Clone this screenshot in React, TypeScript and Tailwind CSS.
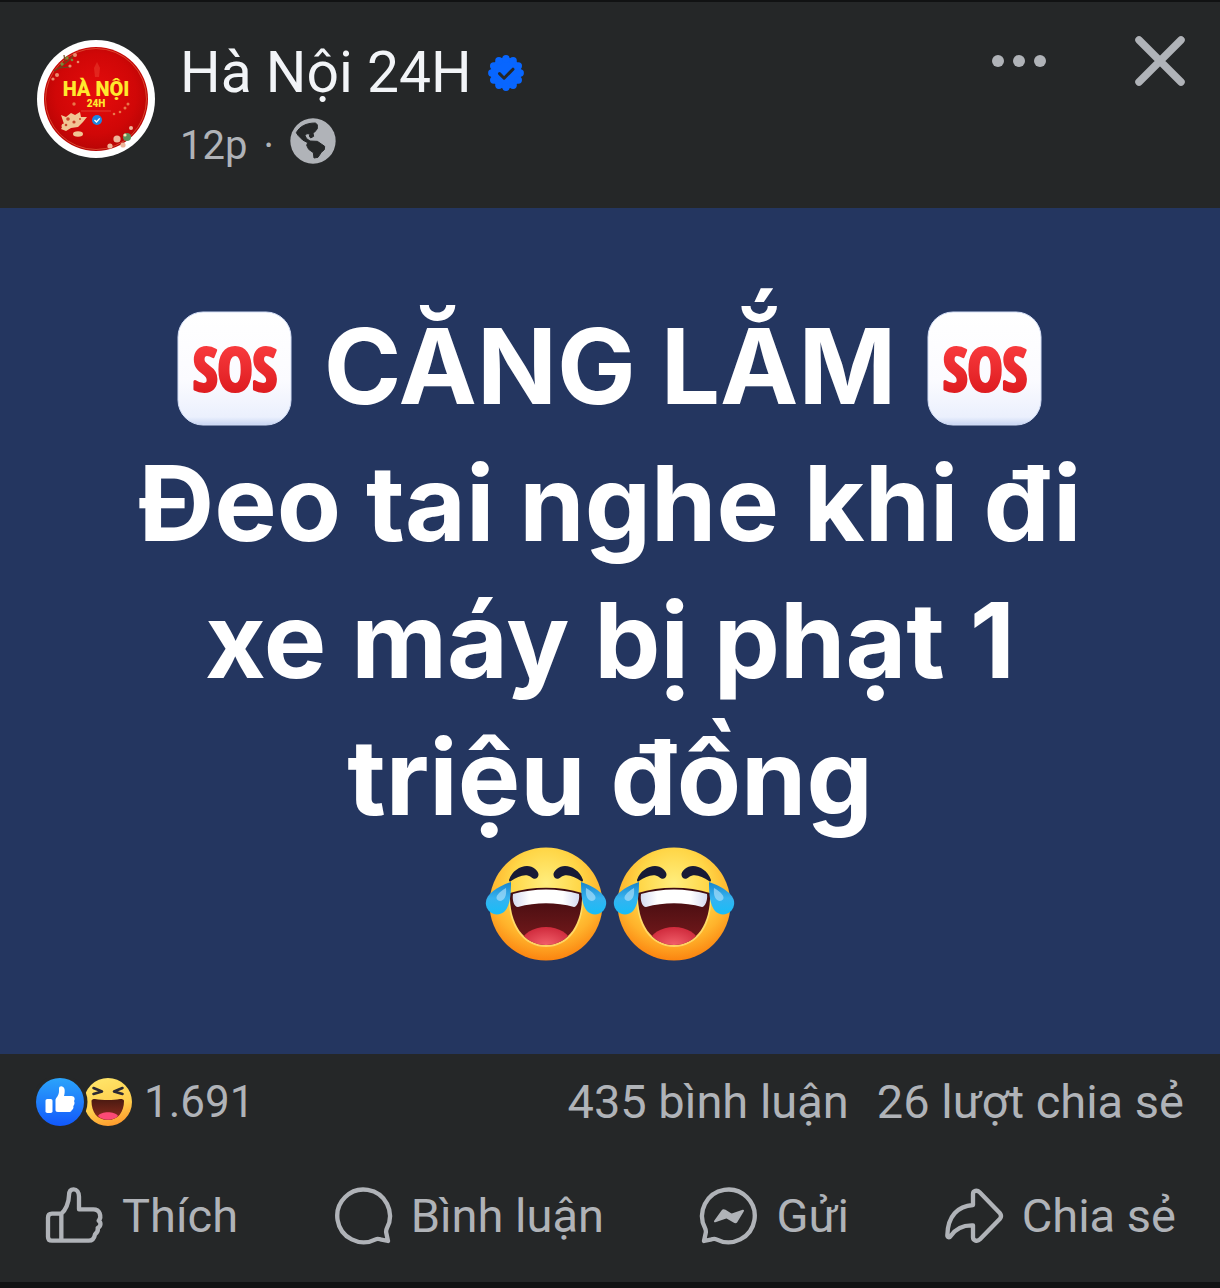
import type { ReactNode } from "react";

function Avatar() {
  return (
    <svg viewBox="0 0 118 118" className="size-[118px] shrink-0" role="img" aria-label="Hà Nội 24H">
      <defs>
        <radialGradient id="avatarRed" cx="50%" cy="45%" r="55%">
          <stop offset="0" stopColor="#e60c0c" />
          <stop offset="0.7" stopColor="#d00707" />
          <stop offset="1" stopColor="#b80505" />
        </radialGradient>
      </defs>
      <circle cx="59" cy="59" r="59" fill="#fff" />
      <circle cx="59" cy="59" r="52" fill="url(#avatarRed)" />
      <circle cx="59" cy="59" r="50.5" fill="none" stroke="#e8714a" strokeWidth="0.6" />
      <path d="M17 31 Q28 25 38 14 M22 28 L33 27 M28 22 L27 15" stroke="#6b4a1e" strokeWidth="1.2" fill="none" />
      <g fill="#e98a6c">
        <circle cx="38" cy="15" r="2" />
        <circle cx="33" cy="26" r="1.6" />
        <circle cx="20" cy="35" r="2" />
        <circle cx="16" cy="39" r="1.6" />
        <circle cx="41" cy="22" r="1.3" />
      </g>
      <g fill="#7d8a3a">
        <circle cx="30" cy="18" r="1.7" />
        <circle cx="25" cy="24" r="1.7" />
        <circle cx="35" cy="20" r="1.3" />
      </g>
      <path d="M60 22 l3 6 -1 9 h-4 l-1 -9z" fill="#f0503c" opacity="0.4" />
      <text x="59" y="56" textAnchor="middle" fontSize="20" fontWeight="900" fill="#ffe92e" fontFamily="Roboto, sans-serif">
        HÀ NỘI
      </text>
      <text x="59" y="67" textAnchor="middle" fontSize="10" fontWeight="900" fill="#ffe92e" fontFamily="Roboto, sans-serif">
        24H
      </text>
      <path d="M44 71 H74" stroke="#e8604a" strokeWidth="0.6" />
      <g fill="#e9764a">
        <circle cx="37" cy="64" r="1.7" />
        <circle cx="77" cy="74" r="1.3" />
        <circle cx="83" cy="72" r="1.3" />
        <circle cx="88" cy="68" r="1.5" />
        <circle cx="91" cy="64" r="1.5" />
      </g>
      <circle cx="60" cy="80" r="5" fill="#1d86e0" />
      <path d="M57.5 80 l2 2 3.2 -3.6" fill="none" stroke="#fff" strokeWidth="1.4" />
      <g fill="#f1c694">
        <path d="M24 75 l5 2 5 -4 4 2 5 -3 1 5 6 0 -4 5 -5 5 -7 1 -5 3 -5 -2 3 -5z" />
        <ellipse cx="41" cy="94" rx="5" ry="2.8" />
        <circle cx="27" cy="86" r="2.5" />
      </g>
      <g fill="#c8452a">
        <circle cx="31" cy="79" r="1.8" />
        <circle cx="37" cy="82" r="1.6" />
        <circle cx="29" cy="85" r="1.3" />
        <circle cx="43" cy="79" r="1" />
      </g>
      <g fill="#eeb59a">
        <circle cx="80" cy="99" r="3.6" />
        <circle cx="73" cy="106" r="2.6" />
        <circle cx="94" cy="88" r="2" />
        <circle cx="86" cy="105" r="2.6" />
      </g>
      <circle cx="90" cy="97" r="4" fill="#5f8f5a" />
      <circle cx="88" cy="95" r="1.6" fill="#f6e2b0" />
    </svg>
  );
}

function VerifiedBadge() {
  const points = Array.from({ length: 12 }, (_, i) => {
    const a = (i * Math.PI) / 6;
    return [18 + 14.2 * Math.cos(a), 18 + 14.2 * Math.sin(a)];
  });
  return (
    <svg viewBox="0 0 36 36" className="size-9" role="img" aria-label="Đã xác minh">
      <g fill="#0866ff">
        <circle cx="18" cy="18" r="15.4" />
        {points.map(([x, y], i) => (
          <circle key={i} cx={x} cy={y} r="3.7" />
        ))}
      </g>
      <path d="M11.5 18.6 l4.6 4.6 8.900 -9" fill="none" stroke="#252728" strokeWidth="3" strokeLinecap="round" strokeLinejoin="round" />
    </svg>
  );
}

function Globe() {
  return (
    <svg viewBox="0 0 138 138" className="size-[46px]" role="img" aria-label="Công khai">
      <circle cx="69" cy="69" r="68" fill="#b0b3b8" />
      <path
        d="M19 44 C28 26 48 15 76 15 L82 20 L82 32 L74 42 L69 46 L71 55 L62 60 L58 54 L60 48 L50 47 L45 53 L50 62 L60 69 L82 70 L94 78 L104 85 L103 95 L94 103 L84 118 L72 120 L70 104 L56 94 L50 82 L53 74 L38 66 L24 52 Z"
        fill="#252728"
        stroke="#252728"
        strokeWidth="3"
        strokeLinejoin="round"
      />
    </svg>
  );
}

function SosEmoji() {
  return (
    <svg viewBox="0 0 128 128" className="inline-block h-32 w-32 align-[-29px]" role="img" aria-label="SOS">
      <defs>
        <linearGradient id="sosTile" x1="0" y1="0" x2="0" y2="1">
          <stop offset="0" stopColor="#ffffff" />
          <stop offset="0.6" stopColor="#fbfbff" />
          <stop offset="0.93" stopColor="#ebf0fd" />
          <stop offset="1" stopColor="#c8d5f3" />
        </linearGradient>
        <linearGradient id="sosRed" x1="0" y1="0" x2="0" y2="1">
          <stop offset="0.2" stopColor="#f93b3e" />
          <stop offset="0.85" stopColor="#dc1a1e" />
        </linearGradient>
      </defs>
      <rect x="7" y="7" width="113" height="113" rx="25" fill="url(#sosTile)" stroke="#d3def6" strokeWidth="1" />
      <text x="64" y="86" textAnchor="middle" fontSize="59" fontWeight="700" fill="url(#sosRed)" stroke="url(#sosRed)" strokeWidth="3" strokeLinejoin="round" fontFamily="'Open Sans Condensed', 'Open Sans', sans-serif">
        SOS
      </text>
    </svg>
  );
}

function JoyEmoji() {
  return (
    <svg viewBox="0 0 128 116" className="inline-block h-[116px] w-32 align-[-10px]" role="img" aria-label="Cười ra nước mắt">
      <defs>
        <radialGradient id="joyFace" cx="50%" cy="32%" r="68%">
          <stop offset="0" stopColor="#ffee7e" />
          <stop offset="0.45" stopColor="#ffd647" />
          <stop offset="0.75" stopColor="#ffb22b" />
          <stop offset="1" stopColor="#fb8410" />
        </radialGradient>
        <linearGradient id="joyMouth" x1="0" y1="0" x2="0" y2="1">
          <stop offset="0" stopColor="#3d0b0f" />
          <stop offset="1" stopColor="#781a1c" />
        </linearGradient>
        <radialGradient id="joyTongue" cx="50%" cy="60%" r="60%">
          <stop offset="0" stopColor="#f2606b" />
          <stop offset="1" stopColor="#cf2a3c" />
        </radialGradient>
        <linearGradient id="joyTear" x1="0" y1="0" x2="0" y2="1">
          <stop offset="0" stopColor="#1784cc" />
          <stop offset="0.5" stopColor="#36b3ef" />
          <stop offset="1" stopColor="#17bdf8" />
        </linearGradient>
        <linearGradient id="joyTeeth" x1="0" y1="0" x2="1" y2="0">
          <stop offset="0" stopColor="#d5daf0" />
          <stop offset="0.25" stopColor="#ffffff" />
          <stop offset="0.75" stopColor="#ffffff" />
          <stop offset="1" stopColor="#d5daf0" />
        </linearGradient>
        <clipPath id="joyMouthClip">
          <path d="M28 47 C50 40 78 40 100 47 C101 78 86 99 64 99 C42 99 27 78 28 47Z" />
        </clipPath>
      </defs>
      <circle cx="64" cy="58" r="56.5" fill="url(#joyFace)" />
      <path d="M27 48 C50 40 78 40 101 48 C103 79 87 101 64 101 C41 101 25 79 27 48Z" fill="#fff08a" opacity="0.6" />
      <path d="M28 47 C50 40 78 40 100 47 C101 78 86 99 64 99 C42 99 27 78 28 47Z" fill="url(#joyMouth)" />
      <g clipPath="url(#joyMouthClip)">
        <ellipse cx="64" cy="96" rx="24" ry="15" fill="url(#joyTongue)" />
      </g>
      <path d="M31 48 C52 42 76 42 97 48 C98 54 95 61 92 61 C74 56 54 56 36 61 C32 61 30 54 31 48Z" fill="url(#joyTeeth)" />
      <path
        d="M27 34 C30 25 38 20 45 20 C51 20 57 25 56.500 29 C56 33 52 34 49 31 C44 27 36 30 29 35 C28 36 27 35.500 27 34Z M101 34 C98 25 90 20 83 20 C77 20 71 25 71.500 29 C72 33 76 34 79 31 C84 27 92 30 99 35 C100 36 101 35.500 101 34Z"
        fill="#171a36"
      />
      <path d="M29 36 C29 49 28 59 23 65 C17 71 6 69 4 59 C2 49 15 41 29 36Z" fill="url(#joyTear)" />
      <path d="M99 36 C99 49 100 59 105 65 C111 71 122 69 124 59 C126 49 113 41 99 36Z" fill="url(#joyTear)" />
      <path d="M24 42 C25 50 22 55 18 55 C13 54 12 49 24 42Z" fill="#a7ddfa" opacity="0.7" />
      <path d="M104 42 C103 50 106 55 110 55 C115 54 116 49 104 42Z" fill="#a7ddfa" opacity="0.7" />
    </svg>
  );
}

function Reactions() {
  return (
    <svg viewBox="0 0 96 48" className="h-12 w-24" role="img" aria-label="Thích và Haha">
      <defs>
        <linearGradient id="likeBlue" x1="0" y1="0" x2="0" y2="1">
          <stop offset="0" stopColor="#2ba4fb" />
          <stop offset="1" stopColor="#1258fb" />
        </linearGradient>
        <linearGradient id="hahaFace" x1="0.3" y1="0" x2="0.6" y2="1">
          <stop offset="0" stopColor="#ffe56a" />
          <stop offset="0.6" stopColor="#ffcf4d" />
          <stop offset="1" stopColor="#ff9a2c" />
        </linearGradient>
        <linearGradient id="hahaMouth" x1="0" y1="0" x2="0" y2="1">
          <stop offset="0" stopColor="#4a1a12" />
          <stop offset="1" stopColor="#8c2c1c" />
        </linearGradient>
      </defs>
      <circle cx="72" cy="24" r="24" fill="url(#hahaFace)" />
      <path d="M55.500 23 C55.500 21.500 57 21 59 21 C67 22.300 77 22.300 84 21 C86.500 21 88 21.500 88 23 C88 34 82 42 72 42 C61 42 55.500 34 55.500 23Z" fill="url(#hahaMouth)" />
      <path d="M62 38 C65 33 79 33 82 38 C77 43 67 43 62 38Z" fill="#fb4a75" />
      <path d="M57.500 10 L66 13.500 L57.500 16 M86.500 10 L78 13.500 L86.500 16" fill="none" stroke="#2d2a33" strokeWidth="2.600" strokeLinecap="round" strokeLinejoin="round" />
      <circle cx="24" cy="24" r="27.5" fill="#252728" />
      <circle cx="24" cy="24" r="24" fill="url(#likeBlue)" />
      <rect x="9.500" y="21" width="7" height="14" rx="1.800" fill="#fff" />
      <path d="M19.500 32 V22 C19.500 20 23 18 23 13 V10.500 C23 7.500 27.500 7.500 28.500 11 C29 13.500 28.500 16 28 18 H35.500 C38.500 18 39.500 21 38 23 C39 24.500 38.500 27 37.300 28 C37.800 30 37 31.500 35.800 32 C35.500 33.500 34.500 34 33 34 H22 C20 34 19.500 33 19.500 32Z" fill="#fff" />
    </svg>
  );
}

function Outline({ children }: { children: ReactNode }) {
  return (
    <svg viewBox="0 0 180 180" className="size-15 shrink-0" fill="none" stroke="#b0b3b8" strokeWidth="13" strokeLinecap="round" strokeLinejoin="round" aria-hidden="true">
      {children}
    </svg>
  );
}

const actions = [
  {
    label: "Thích",
    icon: (
      <Outline>
        <path d="M52 83 V164 M52 83 H24 Q12 83 12 95 V152 Q12 164 24 164 H134 C146 164 151 157 153 145 C160 139 163 133 161 126 C171 121 172 110 164 104 C171 97 170 90 167 82 C164 74 158 70 148 70 H105 V32 C105 18 98 10 89 10 C80 10 75 16 75 28 C75 50 64 74 52 83Z" />
      </Outline>
    ),
  },
  {
    label: "Bình luận",
    icon: (
      <Outline>
        <path d="M162 126 A79 79 0 1 0 128 160 Q134 157 142 160 L165 165 L160 142 Q158 134 162 126Z" />
      </Outline>
    ),
  },
  {
    label: "Gửi",
    icon: (
      <Outline>
        <path d="M18 126 A79 79 0 1 1 52 160 Q46 157 38 160 L15 165 L20 142 Q22 134 18 126Z" />
        <path d="M48 106 L70 75 Q73 71 78 74 L97 86 L132 74 L113 106 Q110 110 105 107 L83 94Z" fill="#b0b3b8" strokeWidth="6" />
      </Outline>
    ),
  },
  {
    label: "Chia sẻ",
    icon: (
      <Outline>
        <path d="M10 148 C11 90 42 60 87 57 V24 C87 14 99 11 107 19 L168 82 Q174 90 168 98 L108 160 C100 168 87 164 87 154 V118 C58 117 36 126 20 150 C16 156 10 154 10 148Z" />
      </Outline>
    ),
  },
];

export default function App() {
  return (
    <article className="w-full border-t-2 border-b-[6px] border-[#111213] bg-[#252728] font-[Roboto,sans-serif] text-[#b0b3b8]">
      <header className="flex items-start pt-[34px] pr-[35px] pb-[30px] pl-[37px]">
        <div className="pt-1">
          <Avatar />
        </div>
        <div className="ml-[25px] flex flex-1 flex-col gap-[11px] pt-[3px]">
          <div className="flex items-center gap-4">
            <h1 className="text-[57px] leading-[68px] text-[#f2f4f7]">Hà Nội 24H</h1>
            <VerifiedBadge />
          </div>
          <div className="flex h-15 items-start gap-4 text-[40px] leading-[56px]">
            <span>12p</span>
            <span>·</span>
            <Globe />
          </div>
        </div>
        <button type="button" aria-label="Tùy chọn khác" className="mr-[89px] flex h-[50px] items-center gap-[9px]">
          <span className="size-3 rounded-full bg-[#b0b3b8]" />
          <span className="size-3 rounded-full bg-[#b0b3b8]" />
          <span className="size-3 rounded-full bg-[#b0b3b8]" />
        </button>
        <button type="button" aria-label="Đóng">
          <svg viewBox="0 0 50 50" className="size-[50px]" stroke="#b0b3b8" strokeWidth="7.5" strokeLinecap="round">
            <path d="M4 4 L46 46 M46 4 L4 46" />
          </svg>
        </button>
      </header>

      <section className="bg-[#243660] px-6 pt-[89px] pb-[72px] text-center font-[Inter,sans-serif] text-[105px] leading-[137px] font-bold text-white">
        <p>
          <SosEmoji /> CĂNG LẮM <SosEmoji />
          <br />
          Đeo tai nghe khi đi
          <br />
          xe máy bị phạt 1
          <br />
          triệu đồng
          <br />
          <JoyEmoji />
          <JoyEmoji />
        </p>
      </section>

      <div className="flex items-center justify-between px-9 pt-5 text-[47px] leading-[56px]">
        <div className="flex items-center gap-3">
          <Reactions />
          <span className="text-[44px]">1.691</span>
        </div>
        <div className="flex gap-7">
          <span>435 bình luận</span>
          <span>26 lượt chia sẻ</span>
        </div>
      </div>

      <div className="flex items-center justify-between px-11 pt-14 pb-9 text-[47px] leading-[56px]">
        {actions.map(({ label, icon }) => (
          <button key={label} type="button" className="flex items-center gap-[18px]">
            {icon}
            <span>{label}</span>
          </button>
        ))}
      </div>
    </article>
  );
}
